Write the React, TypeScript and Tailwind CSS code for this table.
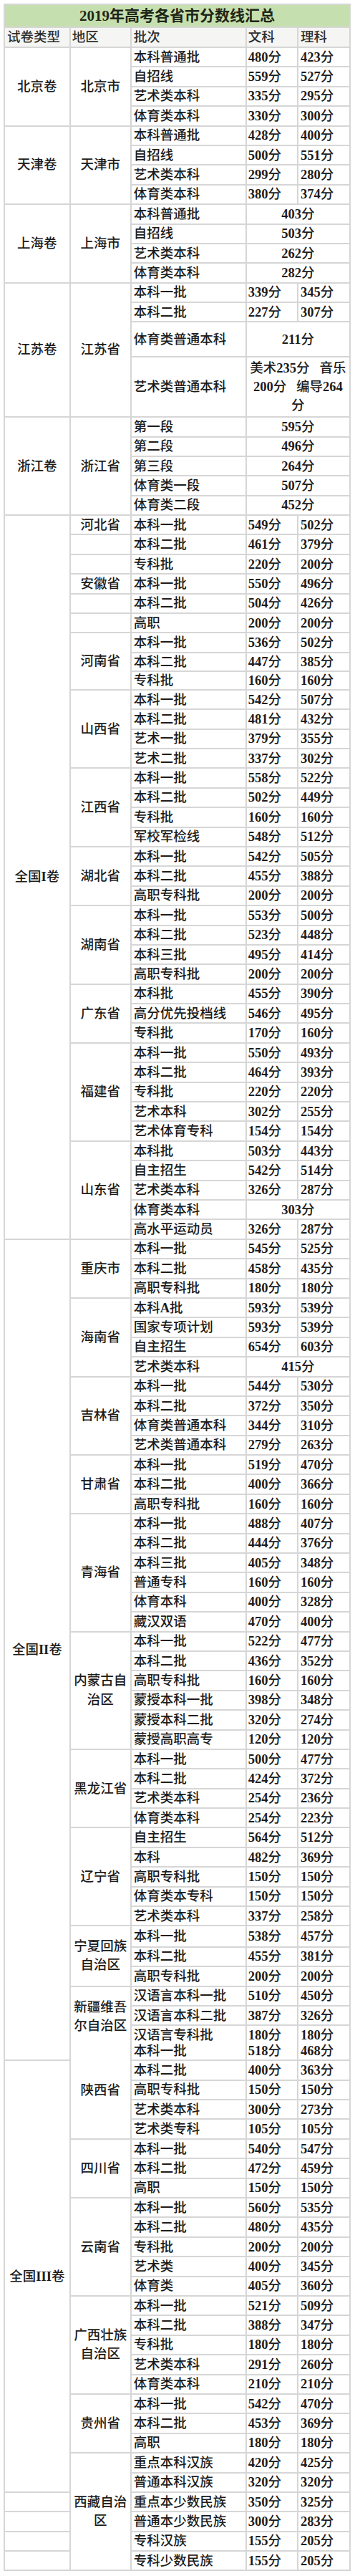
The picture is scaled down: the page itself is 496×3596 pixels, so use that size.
import React from 'react';

type Cell = [React.ReactNode, number];
type Row = {
    p?: Cell;
    a?: Cell;
    b: React.ReactNode;
    w?: React.ReactNode;
    l?: React.ReactNode;
    both?: React.ReactNode;
    h?: string;
};

// digits and latin letters are bold serif, the rest is CJK
function T({ s }: { s: string }) {
    const parts = s.split(/([0-9A-Za-z]+)/);
    return (
        <>
            {parts.map((x, i) => (i % 2 === 1 ? <b key={i} className="font-bold">{x}</b> : <span key={i}>{x}</span>))}
        </>
    );
}

const show = (v: React.ReactNode) => (typeof v === 'string' ? <T s={v} /> : v);

const r = (b: string, w: string, l: string, extra: Partial<Row> = {}): Row => ({ b, w: w + '分', l: l + '分', ...extra });
const s = (b: string, both: string, extra: Partial<Row> = {}): Row => ({ b, both: both + '分', ...extra });

const lines = (a: string, b: string) => (
    <div className="leading-[26.5px]">
        {a}
        <br />
        {b}
    </div>
);

const rows: Row[] = [
    r('本科普通批', '480', '423', { p: ['北京卷', 4], a: ['北京市', 4] }),
    r('自招线', '559', '527'),
    r('艺术类本科', '335', '295'),
    r('体育类本科', '330', '300'),
    r('本科普通批', '428', '400', { p: ['天津卷', 4], a: ['天津市', 4] }),
    r('自招线', '500', '551'),
    r('艺术类本科', '299', '280'),
    r('体育类本科', '380', '374'),
    s('本科普通批', '403', { p: ['上海卷', 4], a: ['上海市', 4] }),
    s('自招线', '503'),
    s('艺术类本科', '262'),
    s('体育类本科', '282'),
    r('本科一批', '339', '345', { p: ['江苏卷', 4], a: ['江苏省', 4] }),
    r('本科二批', '227', '307'),
    s('体育类普通本科', '211', { h: 'h-[48.7px]' }),
    {
        b: '艺术类普通本科',
        both: (
            <div className="leading-[26px]">
                <T s={'美术235分\u00a0\u00a0\u00a0音乐'} />
                <br />
                <T s={'200分\u00a0\u00a0\u00a0编导264'} />
                <br />
                <T s="分" />
            </div>
        ),
        h: 'h-[84px]',
    },
    s('第一段', '595', { p: ['浙江卷', 5], a: ['浙江省', 5] }),
    s('第二段', '496'),
    s('第三段', '264'),
    s('体育类一段', '507'),
    s('体育类二段', '452'),

    r('本科一批', '549', '502', { p: ['全国I卷', 37], a: ['河北省', 1] }),
    r('本科二批', '461', '379', { a: ['', 1] }),
    r('专科批', '220', '200', { a: ['', 1] }),
    r('本科一批', '550', '496', { a: ['安徽省', 1] }),
    r('本科二批', '504', '426', { a: ['', 1] }),
    r('高职', '200', '200', { a: ['', 1] }),
    r('本科一批', '536', '502', { a: ['河南省', 3] }),
    r('本科二批', '447', '385', { h: 'h-[25.8px]' }),
    r('专科批', '160', '160', { h: 'h-[25.8px]' }),
    r('本科一批', '542', '507', { a: ['山西省', 4] }),
    r('本科二批', '481', '432'),
    r('艺术一批', '379', '355'),
    r('艺术二批', '337', '302'),
    r('本科一批', '558', '522', { a: ['江西省', 4] }),
    r('本科二批', '502', '449'),
    r('专科批', '160', '160'),
    r('军校军检线', '548', '512'),
    r('本科一批', '542', '505', { a: ['湖北省', 3] }),
    r('本科二批', '455', '388'),
    r('高职专科批', '200', '200'),
    r('本科一批', '553', '500', { a: ['湖南省', 4] }),
    r('本科二批', '523', '448'),
    r('本科三批', '495', '414'),
    r('高职专科批', '200', '200'),
    r('本科批', '455', '390', { a: ['广东省', 3] }),
    r('高分优先投档线', '546', '495'),
    r('专科批', '170', '160'),
    r('本科一批', '550', '493', { a: ['福建省', 5] }),
    r('本科二批', '464', '393'),
    r('专科批', '220', '220'),
    r('艺术本科', '302', '255'),
    r('艺术体育专科', '154', '154'),
    r('本科批', '503', '443', { a: ['山东省', 5] }),
    r('自主招生', '542', '514'),
    r('艺术类本科', '326', '287'),
    s('体育类本科', '303'),
    r('高水平运动员', '326', '287'),

    r('本科一批', '545', '525', { p: ['全国II卷', 41], a: ['重庆市', 3] }),
    r('本科二批', '458', '435'),
    r('高职专科批', '180', '180'),
    r('本科A批', '593', '539', { a: ['海南省', 4] }),
    r('国家专项计划', '593', '539'),
    r('自主招生', '654', '603'),
    s('艺术类本科', '415'),
    r('本科一批', '544', '530', { a: ['吉林省', 4] }),
    r('本科二批', '372', '350'),
    r('体育类普通本科', '344', '310'),
    r('艺术类普通本科', '279', '263'),
    r('本科一批', '519', '470', { a: ['甘肃省', 3] }),
    r('本科二批', '400', '366'),
    r('高职专科批', '160', '160'),
    r('本科一批', '488', '407', { a: ['青海省', 6] }),
    r('本科二批', '444', '376'),
    r('本科三批', '405', '348'),
    r('普通专科', '160', '160'),
    r('体育本科', '400', '328'),
    r('藏汉双语', '470', '400'),
    r('本科一批', '522', '477', { a: [lines('内蒙古自', '治区'), 6] }),
    r('本科二批', '436', '352'),
    r('高职专科批', '160', '160'),
    r('蒙授本科一批', '398', '348'),
    r('蒙授本科二批', '320', '274'),
    r('蒙授高职高专', '120', '120'),
    r('本科一批', '500', '477', { a: ['黑龙江省', 4] }),
    r('本科二批', '424', '372'),
    r('艺术类本科', '254', '236'),
    r('体育类本科', '254', '223'),
    r('自主招生', '564', '512', { a: ['辽宁省', 5] }),
    r('本科', '482', '369'),
    r('高职专科批', '150', '150'),
    r('体育类本专科', '150', '150'),
    r('艺术类本科', '337', '258'),
    r('本科一批', '538', '457', { a: [lines('宁夏回族', '自治区'), 3], h: 'h-[29.3px]' }),
    r('本科二批', '455', '381'),
    r('高职专科批', '200', '200'),
    r('汉语言本科一批', '510', '450', {
        a: [
            <div className="flex flex-col items-center self-start">
                <div className="pt-[15px] leading-[26.7px]">
                    新疆维吾
                    <br />
                    尔自治区
                </div>
                <div className="mt-[63px] leading-[26.7px]">陕西省</div>
            </div>,
            7,
        ],
    }),
    r('汉语言本科二批', '387', '326'),
    {
        b: (
            <div className="leading-[22px]">
                汉语言专科批
                <br />
                本科一批
            </div>
        ),
        w: (
            <div className="leading-[22px]">
                <T s="180分" />
                <br />
                <T s="518分" />
            </div>
        ),
        l: (
            <div className="leading-[22px]">
                <T s="180分" />
                <br />
                <T s="468分" />
            </div>
        ),
        h: 'h-[49px]',
    },

    r('本科二批', '400', '363', { p: ['全国III卷', 22] }),
    r('高职专科批', '150', '150'),
    r('艺术类本科', '300', '273'),
    r('艺术类专科', '105', '105'),
    r('本科一批', '540', '547', { a: ['四川省', 3] }),
    r('本科二批', '472', '459'),
    r('高职', '150', '150'),
    r('本科一批', '560', '535', { a: ['云南省', 5] }),
    r('本科二批', '480', '435'),
    r('专科批', '200', '200'),
    r('艺术类', '400', '345'),
    r('体育类', '405', '360'),
    r('本科一批', '521', '509', { a: [lines('广西壮族', '自治区'), 5] }),
    r('本科二批', '388', '347'),
    r('专科批', '180', '180'),
    r('艺术类本科', '291', '260'),
    r('体育类本科', '210', '210'),
    r('本科一批', '542', '470', { a: ['贵州省', 3] }),
    r('本科二批', '453', '369'),
    r('高职', '180', '180'),
    r('重点本科汉族', '420', '425', { a: [lines('西藏自治', '区'), 6] }),
    r('普通本科汉族', '320', '320'),
    r('重点本少数民族', '350', '325', { p: ['', 1] }),
    r('普通本少数民族', '300', '283', { p: ['', 1] }),
    r('专科汉族', '155', '205', { p: ['', 1] }),
    r('专科少数民族', '155', '205', { p: ['', 1] }),
];

const cell = 'border-2 border-[#d6d6d6] p-0 leading-[24px] whitespace-nowrap';

export default function App() {
    return (
        <div className="w-[496px] min-h-[3596px] bg-white pt-[5px] pl-[5px] text-[#1c1c1c]">
            <table className="w-[483px] table-fixed border-collapse font-['Liberation_Serif','Noto_Sans_CJK_SC',serif] text-[18.5px] font-medium">
                <colgroup>
                    <col className="w-[91.7px]" />
                    <col className="w-[85px]" />
                    <col className="w-[161px]" />
                    <col className="w-[72.3px]" />
                    <col className="w-[73px]" />
                </colgroup>
                <tbody>
                    <tr className="h-[31.7px]">
                        <td colSpan={5} className={`${cell} bg-[#c6dfae] text-center text-[21px] font-bold text-[#1e2618]`}>
                            2019年高考各省市分数线汇总
                        </td>
                    </tr>
                    <tr className="h-[28.3px] bg-[#f5f6f3] text-[#2e2e2e]">
                        <td className={`${cell} pl-[3px]`}>试卷类型</td>
                        <td className={`${cell} pl-[2px]`}>地区</td>
                        <td className={`${cell} pl-[3px]`}>批次</td>
                        <td className={`${cell} pl-[2px]`}>文科</td>
                        <td className={`${cell} pl-[3px]`}>理科</td>
                    </tr>
                    {rows.map((row, i) => (
                        <tr key={i} className={row.h ?? 'h-[27.4px]'}>
                            {row.p && (
                                <td rowSpan={row.p[1]} className={`${cell} text-center`}>
                                    {show(row.p[0])}
                                </td>
                            )}
                            {row.a && (
                                <td rowSpan={row.a[1]} className={`${cell} text-center ${row.a[1] === 7 ? 'align-top' : ''}`}>
                                    {show(row.a[0])}
                                </td>
                            )}
                            <td className={`${cell} pl-[3px]`}>{show(row.b)}</td>
                            {row.both !== undefined ? (
                                <td colSpan={2} className={`${cell} text-center`}>
                                    {show(row.both)}
                                </td>
                            ) : (
                                <>
                                    <td className={`${cell} pl-[2px]`}>{show(row.w)}</td>
                                    <td className={`${cell} pl-[3px]`}>{show(row.l)}</td>
                                </>
                            )}
                        </tr>
                    ))}
                </tbody>
            </table>
        </div>
    );
}
